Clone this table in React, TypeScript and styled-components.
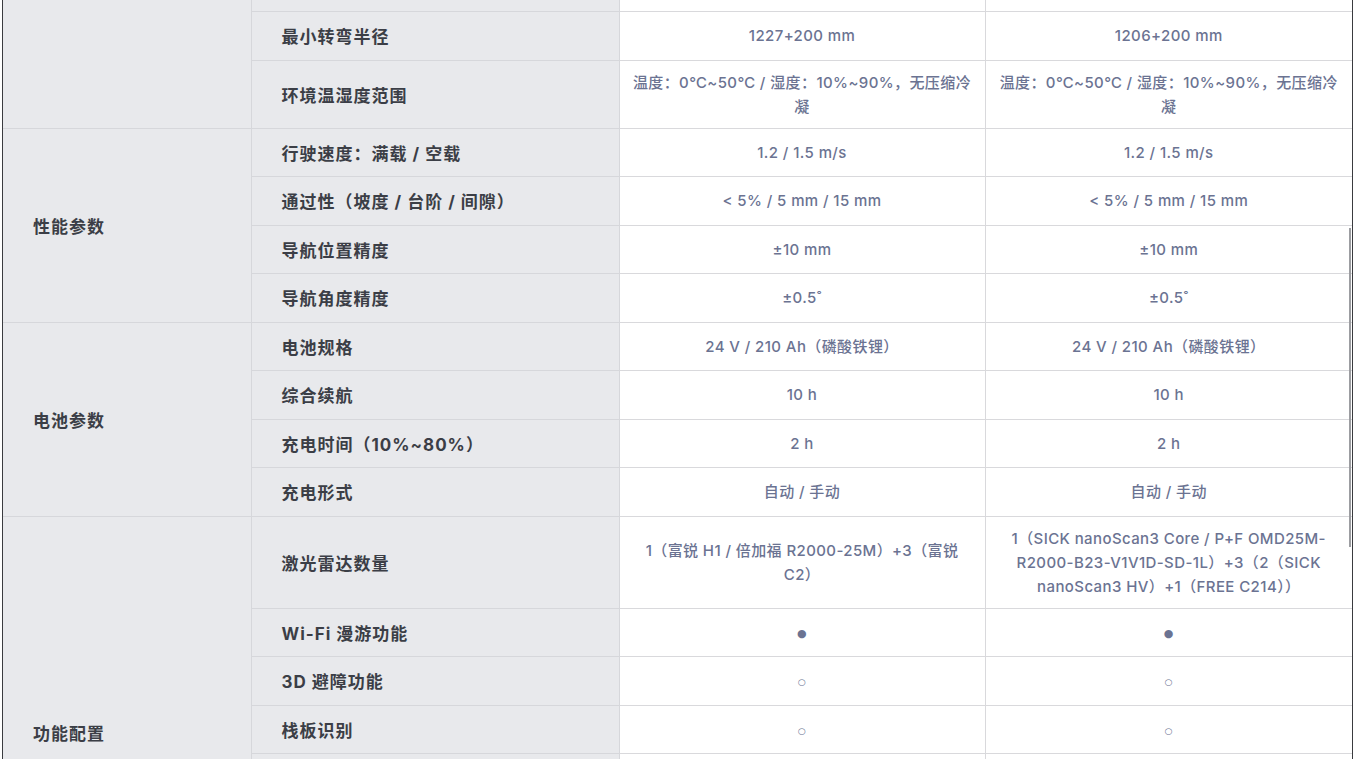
import { useLayoutEffect, useRef } from 'react';
import styled, { createGlobalStyle } from 'styled-components';

interface ISpecRow {
  name: string;
  a: string;
  b: string;
}

interface IGroup {
  title: string;
  rows: ISpecRow[];
}

const ANCHOR = '最小转弯半径';

const groups: IGroup[] = [
  {
    title: '基本参数',
    rows: [
      { name: '额定载重', a: '1500 kg', b: '2000 kg' },
      { name: '整车尺寸', a: '1850 × 900 × 1950 mm', b: '1900 × 950 × 2000 mm' },
      { name: '整车自重', a: '680 kg', b: '760 kg' },
      { name: '货叉尺寸', a: '1150 × 185 × 60 mm', b: '1150 × 185 × 60 mm' },
      { name: '最大举升高度', a: '205 mm', b: '205 mm' },
      { name: '最小转弯半径', a: '1227+200 mm', b: '1206+200 mm' },
      {
        name: '环境温湿度范围',
        a: '温度：0℃~50℃ / 湿度：10%~90%，无压缩冷凝',
        b: '温度：0℃~50℃ / 湿度：10%~90%，无压缩冷凝',
      },
    ],
  },
  {
    title: '性能参数',
    rows: [
      { name: '行驶速度：满载 / 空载', a: '1.2 / 1.5 m/s', b: '1.2 / 1.5 m/s' },
      { name: '通过性（坡度 / 台阶 / 间隙）', a: '< 5% / 5 mm / 15 mm', b: '< 5% / 5 mm / 15 mm' },
      { name: '导航位置精度', a: '±10 mm', b: '±10 mm' },
      { name: '导航角度精度', a: '±0.5˚', b: '±0.5˚' },
    ],
  },
  {
    title: '电池参数',
    rows: [
      { name: '电池规格', a: '24 V / 210 Ah（磷酸铁锂）', b: '24 V / 210 Ah（磷酸铁锂）' },
      { name: '综合续航', a: '10 h', b: '10 h' },
      { name: '充电时间（10%~80%）', a: '2 h', b: '2 h' },
      { name: '充电形式', a: '自动 / 手动', b: '自动 / 手动' },
    ],
  },
  {
    title: '功能配置',
    rows: [
      {
        name: '激光雷达数量',
        a: '1（富锐 H1 / 倍加福 R2000-25M）+3（富锐 C2）',
        b: '1（SICK nanoScan3 Core / P+F OMD25M-R2000-B23-V1V1D-SD-1L）+3（2（SICK nanoScan3 HV）+1（FREE C214））',
      },
      { name: 'Wi-Fi 漫游功能', a: '●', b: '●' },
      { name: '3D 避障功能', a: '○', b: '○' },
      { name: '栈板识别', a: '○', b: '○' },
      { name: '货架识别', a: '○', b: '○' },
      { name: '到位检测', a: '●', b: '●' },
      { name: '自动充电', a: '●', b: '●' },
      { name: '远程诊断', a: '○', b: '○' },
    ],
  },
];

const isMark = (v: string) => v === '●' || v === '○';

const SpecTable = () => {
  const frameRef = useRef<HTMLDivElement>(null);
  const anchorRef = useRef<HTMLTableRowElement>(null);

  // 스크롤된 상태 재현: 기준 행이 화면 위에서 12px 지점에 오도록
  useLayoutEffect(() => {
    const frame = frameRef.current;
    const row = anchorRef.current;
    if (!frame || !row) return;
    const offset = row.getBoundingClientRect().top - frame.getBoundingClientRect().top;
    frame.scrollTop = frame.scrollTop + offset - 12;
  }, []);

  return (
    <Shell>
      <Frame ref={frameRef}>
        <Table>
          <colgroup>
            <Col $w={248} />
            <Col $w={368} />
            <Col $w={366} />
            <Col $w={367} />
          </colgroup>
          <tbody>
            {groups.map((group) =>
              group.rows.map((row, i) => (
                <Row key={row.name} ref={row.name === ANCHOR ? anchorRef : undefined}>
                  {i === 0 && <Category rowSpan={group.rows.length}>{group.title}</Category>}
                  <Name>{row.name}</Name>
                  <Value>{isMark(row.a) ? <Mark $filled={row.a === '●'}>{row.a}</Mark> : row.a}</Value>
                  <Value>{isMark(row.b) ? <Mark $filled={row.b === '●'}>{row.b}</Mark> : row.b}</Value>
                </Row>
              ))
            )}
          </tbody>
        </Table>
      </Frame>
      <Thumb />
    </Shell>
  );
};

const App = () => (
  <>
    <GlobalStyle />
    <SpecTable />
  </>
);

const GlobalStyle = createGlobalStyle`
  html, body {
    margin: 0;
    padding: 0;
    background: #ffffff;
    font-family: Inter, "Noto Sans CJK SC", sans-serif;
  }
`;

const Shell = styled.div`
  position: relative;
  width: 1354px;
  height: 759px;
`;

const Frame = styled.div`
  box-sizing: border-box;
  margin-left: 2px;
  width: 1351px;
  height: 759px;
  overflow: hidden;
  border-left: 1px solid #3a3b3f;
  border-right: 1px solid #3a3b3f;
`;

const Thumb = styled.div`
  position: absolute;
  top: 228px;
  right: 3px;
  width: 2px;
  height: 319px;
  background: #9c9da1;
`;

const Table = styled.table`
  width: 1349px;
  border-collapse: collapse;
  table-layout: fixed;
  border: hidden;
`;

const Col = styled.col<{ $w: number }>`
  width: ${(p) => p.$w}px;
`;

const Row = styled.tr`
  height: 48.5px;
`;

const Category = styled.td`
  background: #e8e9ec;
  border: 1px solid #d6d7db;
  padding: 0 30px;
  font-size: 17px;
  font-weight: 700;
  letter-spacing: 1px;
  color: #3b3e46;
  vertical-align: middle;
`;

const Name = styled.td`
  background: #e8e9ec;
  border: 1px solid #d6d7db;
  padding: 0 30px;
  font-size: 17px;
  font-weight: 700;
  letter-spacing: 1px;
  color: #3b3e46;
  vertical-align: middle;
`;

const Value = styled.td`
  background: #ffffff;
  border: 1px solid #d9d9dc;
  padding: 10px 11px 9px;
  font-size: 15px;
  font-weight: 500;
  line-height: 24px;
  letter-spacing: 0.4px;
  color: #6b7392;
  text-align: center;
  vertical-align: middle;
`;

const Mark = styled.span<{ $filled: boolean }>`
  font-family: "DejaVu Sans", sans-serif;
  font-size: ${(p) => (p.$filled ? '11px' : '9px')};
  font-weight: 400;
  color: #6b7392;
`;

export default App;
